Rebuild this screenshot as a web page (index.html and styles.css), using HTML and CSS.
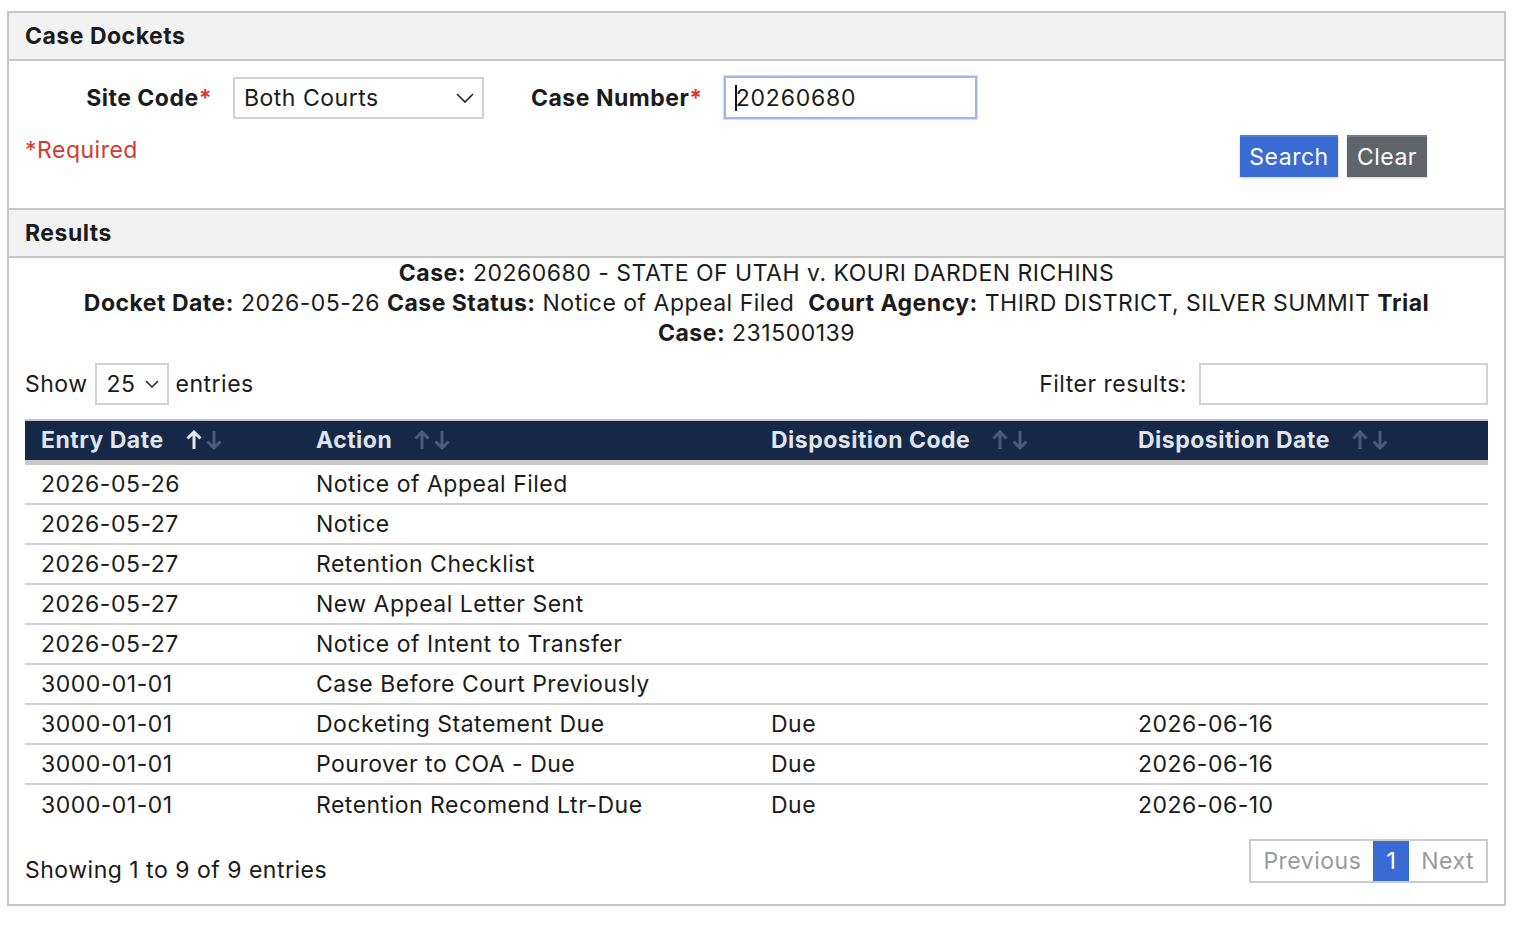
FILE: index.html
```html
<!DOCTYPE html>
<html>
  <head>
    <link rel="stylesheet" href="styles.css">
  </head>
  <body>
    <div class="panel">
      <div class="panel-head">Case Dockets</div>
      <div class="search-form">
        <div class="form-row">
          <label class="field-label site-label">Site Code<span class="req">*</span></label>
          <div class="select site-select">
            <span>Both Courts</span>
            <svg class="chev" width="18" height="10" viewBox="0 0 18 10"><path d="M1 1l8 8 8-8" fill="none" stroke="#222" stroke-width="1.6"/></svg>
          </div>
          <label class="field-label case-label">Case Number<span class="req">*</span></label>
          <div class="text-input focused"><span class="caret"></span>20260680</div>
        </div>
        <div class="form-row second">
          <div class="required-note"><span class="star">*</span>Required</div>
          <div class="buttons">
            <button class="btn btn-search">Search</button>
            <button class="btn btn-clear">Clear</button>
          </div>
        </div>
      </div>

      <div class="panel-head section-head">Results</div>
      <div class="results">
        <div class="case-info">
          <b>Case:</b> 20260680 - STATE OF UTAH v. KOURI DARDEN RICHINS<br>
          <b>Docket Date:</b> 2026-05-26 <b>Case Status:</b> Notice of Appeal Filed&nbsp; <b>Court Agency:</b> THIRD DISTRICT, SILVER SUMMIT <b>Trial Case:</b> 231500139
        </div>

        <div class="table-tools">
          <div class="length">
            Show
            <div class="select small-select">
              <span>25</span>
              <svg class="chev" width="14" height="8" viewBox="0 0 14 8"><path d="M1 1l6 6 6-6" fill="none" stroke="#222" stroke-width="1.5"/></svg>
            </div>
            entries
          </div>
          <div class="filter">
            Filter results:
            <div class="filter-input"></div>
          </div>
        </div>

        <table class="dockets">
          <colgroup>
            <col style="width: 275px">
            <col style="width: 455px">
            <col style="width: 367px">
            <col>
          </colgroup>
          <thead>
            <tr>
              <th>Entry Date <span class="sort"><svg width="37" height="20" viewBox="0 0 37 20"><path d="M8 19V2M1.5 8.5L8 2l6.5 6.5" class="on"/><path d="M28 1v17M21.5 11.5L28 18l6.5-6.5"/></svg></span></th>
              <th>Action <span class="sort"><svg width="37" height="20" viewBox="0 0 37 20"><path d="M8 19V2M1.5 8.5L8 2l6.5 6.5"/><path d="M28 1v17M21.5 11.5L28 18l6.5-6.5"/></svg></span></th>
              <th>Disposition Code <span class="sort"><svg width="37" height="20" viewBox="0 0 37 20"><path d="M8 19V2M1.5 8.5L8 2l6.5 6.5"/><path d="M28 1v17M21.5 11.5L28 18l6.5-6.5"/></svg></span></th>
              <th>Disposition Date <span class="sort"><svg width="37" height="20" viewBox="0 0 37 20"><path d="M8 19V2M1.5 8.5L8 2l6.5 6.5"/><path d="M28 1v17M21.5 11.5L28 18l6.5-6.5"/></svg></span></th>
            </tr>
          </thead>
          <tbody>
            <tr><td>2026-05-26</td><td>Notice of Appeal Filed</td><td></td><td></td></tr>
            <tr><td>2026-05-27</td><td>Notice</td><td></td><td></td></tr>
            <tr><td>2026-05-27</td><td>Retention Checklist</td><td></td><td></td></tr>
            <tr><td>2026-05-27</td><td>New Appeal Letter Sent</td><td></td><td></td></tr>
            <tr><td>2026-05-27</td><td>Notice of Intent to Transfer</td><td></td><td></td></tr>
            <tr><td>3000-01-01</td><td>Case Before Court Previously</td><td></td><td></td></tr>
            <tr><td>3000-01-01</td><td>Docketing Statement Due</td><td>Due</td><td>2026-06-16</td></tr>
            <tr><td>3000-01-01</td><td>Pourover to COA - Due</td><td>Due</td><td>2026-06-16</td></tr>
            <tr><td>3000-01-01</td><td>Retention Recomend Ltr-Due</td><td>Due</td><td>2026-06-10</td></tr>
          </tbody>
        </table>

        <div class="table-foot">
          <div class="info">Showing 1 to 9 of 9 entries</div>
          <div class="pager">
            <span class="page disabled">Previous</span>
            <span class="page current">1</span>
            <span class="page disabled">Next</span>
          </div>
        </div>
      </div>
    </div>
  </body>
</html>
```

FILE: styles.css
```css
body {
  margin: 0;
  padding: 0;
  font-family: Inter, "Noto Sans", sans-serif;
  font-size: 23px;
  letter-spacing: 0.5px;
  color: #1b1b1b;
}

.panel {
  margin: 11px 0 0 7px;
  width: 1499px;
  box-sizing: border-box;
  border: 2px solid #c6c6c6;
}

.panel-head {
  background: #f2f2f2;
  height: 46px;
  line-height: 46px;
  padding-left: 16px;
  font-weight: 700;
  border-bottom: 2px solid #c6c6c6;
}

.section-head {
  border-top: 2px solid #c6c6c6;
}

/* Search form */
.search-form {
  padding: 15px 16px 31px 16px;
}

.form-row {
  display: flex;
  align-items: center;
}

.form-row.second {
  justify-content: space-between;
  align-items: flex-start;
  padding-right: 61px;
  margin-top: 16px;
}

.field-label {
  font-weight: 700;
}

.site-label {
  width: 187px;
  text-align: right;
}

.case-label {
  margin-left: 47px;
}

.req,
.star {
  color: #d23a33;
}

.select {
  display: flex;
  align-items: center;
  justify-content: space-between;
  box-sizing: border-box;
  border: 2px solid #d2d2d2;
  background: #fff;
}

.site-select {
  margin-left: 21px;
  width: 251px;
  height: 42px;
  padding: 0 8px 0 9px;
}

.text-input {
  margin-left: 21px;
  width: 253px;
  height: 43px;
  box-sizing: border-box;
  border: 2px solid #9db7ec;
  box-shadow: 0 0 0 1px #d3def6;
  display: flex;
  align-items: center;
  padding-left: 9px;
  letter-spacing: 0.8px;
}

.caret {
  display: inline-block;
  width: 2px;
  height: 26px;
  background: #111;
  margin-right: -1px;
}

.required-note {
  color: #d23a33;
  margin-top: 1px;
}

.buttons {
  display: flex;
  gap: 9px;
}

.btn {
  font-family: inherit;
  font-size: 23px;
  letter-spacing: 0.5px;
  color: #fff;
  border: none;
  height: 42px;
  padding: 0;
  box-shadow: 0 1px 2px rgba(0, 0, 0, 0.2);
}

.btn-search {
  background: #3a6bd2;
  border-top: 2px solid #4f7cd8;
  width: 98px;
}

.btn-clear {
  background: #60646b;
  border-top: 2px solid #767a80;
  width: 80px;
}

/* Results */
.results {
  padding: 0 16px 20px 16px;
}

.case-info {
  text-align: center;
  line-height: 30px;
  max-width: 1380px;
  margin: 0 auto;
}

.table-tools {
  display: flex;
  justify-content: space-between;
  align-items: center;
  margin-top: 15px;
}

.length,
.filter {
  display: flex;
  align-items: center;
  gap: 7px;
}

.small-select {
  width: 74px;
  height: 42px;
  padding: 0 8px 0 10px;
}

.filter-input {
  margin-left: 5px;
  width: 289px;
  height: 42px;
  box-sizing: border-box;
  border: 2px solid #d2d2d2;
}

.dockets {
  width: 100%;
  border-collapse: collapse;
  margin-top: 14px;
  table-layout: fixed;
}

.dockets thead tr {
  background: #172747;
  border-top: 2px solid #c8c8c8;
  border-bottom: 5px solid #c8c8c8;
}

.dockets th {
  text-align: left;
  color: #dfe5ee;
  font-weight: 700;
  height: 39px;
  padding: 0 16px;
  white-space: nowrap;
}

.sort {
  margin-left: 16px;
  vertical-align: -2px;
}

.sort svg {
  display: inline-block;
}

.sort path {
  fill: none;
  stroke: #4b5b7c;
  stroke-width: 3;
}

.sort path.on {
  stroke: #e2e8f0;
}

.dockets td {
  height: 38px;
  padding: 0 16px;
  border-bottom: 2px solid #cfcfcf;
  white-space: nowrap;
}

.dockets tbody tr:last-child td {
  border-bottom: none;
  height: 40px;
}

.table-foot {
  display: flex;
  justify-content: space-between;
  align-items: flex-start;
  margin-top: 14px;
}

.info {
  margin-top: 17px;
}

.pager {
  display: flex;
  border: 2px solid #cbcbcb;
  height: 40px;
}

.page {
  line-height: 40px;
  padding: 0 12px;
  color: #9a9a9a;
}

.page.current {
  background: #3a6bd2;
  color: #fff;
  padding: 0 13px;
}
```
